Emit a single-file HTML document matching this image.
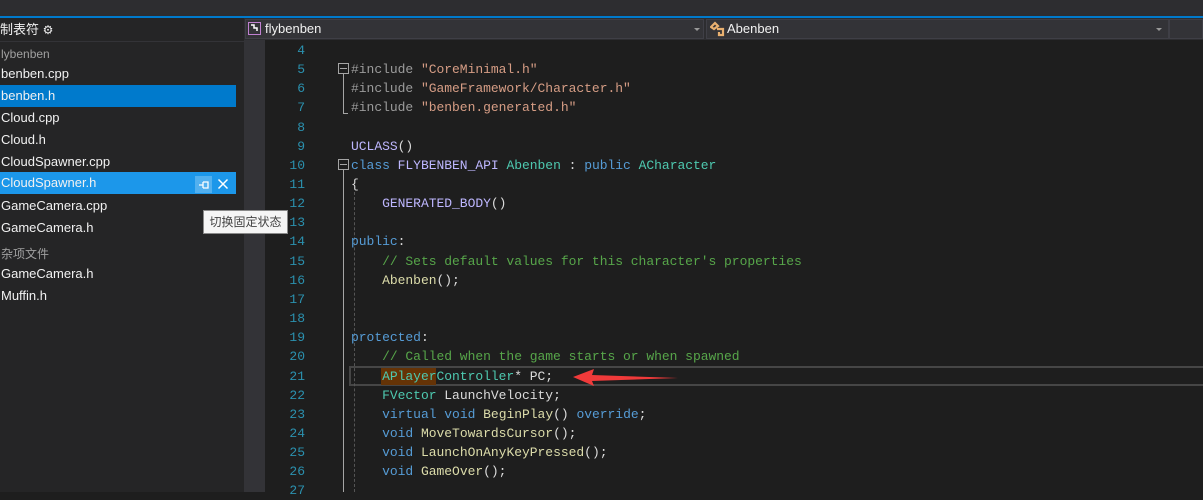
<!DOCTYPE html>
<html><head><meta charset="utf-8"><style>
*{margin:0;padding:0;box-sizing:border-box}
body{width:1203px;height:492px;overflow:hidden;background:#1e1e1e;position:relative;font-family:"Liberation Sans","Noto Sans CJK SC",sans-serif}
.a{position:absolute}
.side{left:0;top:18px;width:244px;height:474px;background:#252526}
.it{position:absolute;left:0;width:236px;height:22px;line-height:22px;font-size:13px;color:#f1f1f1;padding-left:1px}
.grp{color:#a0a0a0;font-size:12px}
.ln{position:absolute;width:305px;left:0;text-align:right;font-family:"Liberation Mono","Noto Sans CJK SC",monospace;font-size:13px;color:#2b91af;height:19px;line-height:19px}
.cd{position:absolute;left:351px;font-family:"Liberation Mono","Noto Sans CJK SC",monospace;font-size:13px;color:#dcdcdc;white-space:pre;height:19px;line-height:19px;letter-spacing:-0.03px}
.pp{color:#9b9b9b}.st{color:#d69d85}.kw{color:#569cd6}.ty{color:#4ec9b0}.cm{color:#57a64a}.mc{color:#beb7ff}.fn{color:#dcdcaa}
</style></head><body>
<div class="a" style="left:0;top:0;width:1203px;height:16px;background:#2d2d30"></div>
<div class="a" style="left:0;top:16px;width:1203px;height:2px;background:#007acc"></div>
<div class="a side"></div>
<div class="a" style="left:0;top:19px;height:22px;line-height:22px;font-size:13px;color:#f1f1f1">制表符 <span style="font-size:12px">⚙</span></div>
<div class="a" style="left:0;top:41px;width:244px;height:1px;background:#333337"></div>
<div class="it grp" style="top:43px">lybenben</div>
<div class="it" style="top:63px">benben.cpp</div>
<div class="it" style="top:85px;background:#007acc">benben.h</div>
<div class="it" style="top:107px">Cloud.cpp</div>
<div class="it" style="top:129px">Cloud.h</div>
<div class="it" style="top:151px">CloudSpawner.cpp</div>
<div class="it" style="top:172px;background:#1c97ea">CloudSpawner.h</div>
<div class="a" style="left:195px;top:176px;width:17px;height:17px;background:#52b0ef"></div>
<svg class="a" style="left:195px;top:176px" width="17" height="17"><path d="M4 9h4M8 6v6M8 6h5v6h-5" stroke="#fff" stroke-width="1.3" fill="none"/></svg>
<svg class="a" style="left:217px;top:178px" width="12" height="12"><path d="M1.5 1.5l9 9M10.5 1.5l-9 9" stroke="#fff" stroke-width="1.5"/></svg>
<div class="it" style="top:195px">GameCamera.cpp</div>
<div class="it" style="top:217px">GameCamera.h</div>
<div class="it grp" style="top:243px">杂项文件</div>
<div class="it" style="top:263px">GameCamera.h</div>
<div class="it" style="top:285px">Muffin.h</div>
<div class="a" style="left:244px;top:18px;width:21px;height:474px;background:#333337"></div>
<div class="a" style="left:244px;top:18px;width:959px;height:22px;background:#2d2d30"></div>
<div class="a" style="left:245px;top:19px;width:459px;height:20px;background:#333337;border:1px solid #3f3f46"></div>
<div class="a" style="left:706px;top:19px;width:463px;height:20px;background:#333337;border:1px solid #3f3f46"></div>
<div class="a" style="left:1169px;top:19px;width:34px;height:20px;background:#333337;border:1px solid #3f3f46"></div>
<svg class="a" style="left:248px;top:22px" width="14" height="14"><rect x="0.5" y="0.5" width="12" height="12" fill="none" stroke="#c080d0"/><path d="M3 3h3v3h3v3" stroke="#fff" stroke-width="1.5" fill="none"/></svg>
<div class="a" style="left:265px;top:19px;line-height:20px;font-size:13px;color:#f1f1f1">flybenben</div>
<div class="a" style="left:694px;top:28px;border:3px solid transparent;border-top:3px solid #999"></div>
<svg class="a" style="left:710px;top:21px" width="16" height="16"><path d="M1 6l4-4 3 3-4 3zM7 8h6v6h-4v-3" stroke="#e8b070" stroke-width="2.2" fill="none"/></svg>
<div class="a" style="left:727px;top:19px;line-height:20px;font-size:13px;color:#f1f1f1">Abenben</div>
<div class="a" style="left:1156px;top:28px;border:3px solid transparent;border-top:3px solid #999"></div>

<div class="a" style="left:265px;top:40px;width:938px;height:452px;background:#1e1e1e"></div>
<div class="a" style="left:349px;top:366px;width:854px;height:20px;border:2px solid #464646;border-right:none"></div>
<div class="a" style="left:381px;top:368px;width:55px;height:17px;background:#653306"></div>

<!-- fold guides -->
<div class="a" style="left:338px;top:63px;width:11px;height:11px;border:1px solid #a5a5a5"></div><div class="a" style="left:340px;top:68px;width:7px;height:1px;background:#a5a5a5"></div>
<div class="a" style="left:343px;top:74px;width:1px;height:40px;background:#a5a5a5"></div><div class="a" style="left:343px;top:113px;width:5px;height:1px;background:#a5a5a5"></div>
<div class="a" style="left:338px;top:159px;width:11px;height:11px;border:1px solid #a5a5a5"></div><div class="a" style="left:340px;top:164px;width:7px;height:1px;background:#a5a5a5"></div>
<div class="a" style="left:343px;top:170px;width:1px;height:322px;background:#a5a5a5"></div>
<div class="a" style="left:354px;top:192px;width:0;height:300px;border-left:1px dashed #555"></div>

<div class="ln" style="top:41px">4</div><div class="ln" style="top:60px">5</div><div class="ln" style="top:79px">6</div><div class="ln" style="top:98px">7</div><div class="ln" style="top:118px">8</div><div class="ln" style="top:137px">9</div><div class="ln" style="top:156px">10</div><div class="ln" style="top:175px">11</div><div class="ln" style="top:194px">12</div><div class="ln" style="top:213px">13</div><div class="ln" style="top:232px">14</div><div class="ln" style="top:252px">15</div><div class="ln" style="top:271px">16</div><div class="ln" style="top:290px">17</div><div class="ln" style="top:309px">18</div><div class="ln" style="top:328px">19</div><div class="ln" style="top:347px">20</div><div class="ln" style="top:367px">21</div><div class="ln" style="top:386px">22</div><div class="ln" style="top:405px">23</div><div class="ln" style="top:424px">24</div><div class="ln" style="top:443px">25</div><div class="ln" style="top:462px">26</div><div class="ln" style="top:481px">27</div>

<div class="cd" style="top:60px"><span class="pp">#include </span><span class="st">"CoreMinimal.h"</span></div>
<div class="cd" style="top:79px"><span class="pp">#include </span><span class="st">"GameFramework/Character.h"</span></div>
<div class="cd" style="top:98px"><span class="pp">#include </span><span class="st">"benben.generated.h"</span></div>
<div class="cd" style="top:137px"><span class="mc">UCLASS</span>()</div>
<div class="cd" style="top:156px"><span class="kw">class</span> <span class="mc">FLYBENBEN_API</span> <span class="ty">Abenben</span> : <span class="kw">public</span> <span class="ty">ACharacter</span></div>
<div class="cd" style="top:175px">{</div>
<div class="cd" style="top:194px">    <span class="mc">GENERATED_BODY</span>()</div>
<div class="cd" style="top:232px"><span class="kw">public</span>:</div>
<div class="cd" style="top:252px">    <span class="cm">// Sets default values for this character's properties</span></div>
<div class="cd" style="top:271px">    <span class="fn">Abenben</span>();</div>
<div class="cd" style="top:328px"><span class="kw">protected</span>:</div>
<div class="cd" style="top:347px">    <span class="cm">// Called when the game starts or when spawned</span></div>
<div class="cd" style="top:367px">    <span class="ty">APlayerController</span>* PC;</div>
<div class="cd" style="top:386px">    <span class="ty">FVector</span> LaunchVelocity;</div>
<div class="cd" style="top:405px">    <span class="kw">virtual</span> <span class="kw">void</span> <span class="fn">BeginPlay</span>() <span class="kw">override</span>;</div>
<div class="cd" style="top:424px">    <span class="kw">void</span> <span class="fn">MoveTowardsCursor</span>();</div>
<div class="cd" style="top:443px">    <span class="kw">void</span> <span class="fn">LaunchOnAnyKeyPressed</span>();</div>
<div class="cd" style="top:462px">    <span class="kw">void</span> <span class="fn">GameOver</span>();</div>

<svg class="a" style="left:570px;top:366px" width="115" height="24"><path d="M3 11 L24 3 L22 9 L108 12 L22 15 L24 20 Z" fill="#f03a3a"/></svg>

<div class="a" style="left:203px;top:210px;width:85px;height:24px;background:#f5f5f5;border:1px solid #8a8a8a;font-size:12px;line-height:22px;color:#444;text-align:center">切换固定状态</div>
</body></html>
